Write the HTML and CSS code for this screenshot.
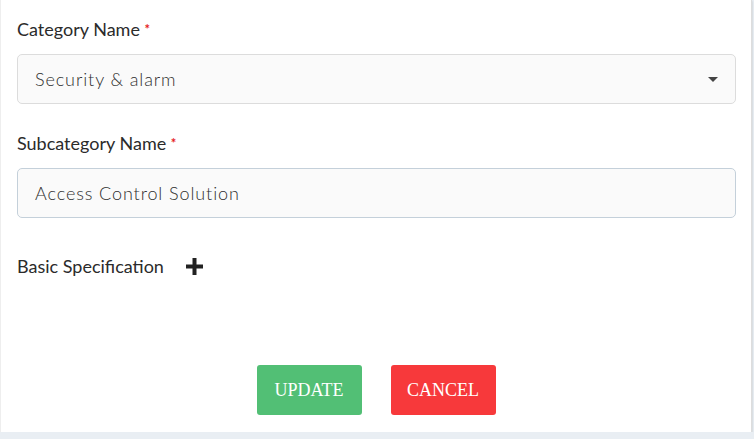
FILE: index.html
```html
<!DOCTYPE html>
<html lang="en">
  <head>
    <meta charset="UTF-8" />
    <title>Edit Subcategory</title>
    <link rel="stylesheet" href="styles.css">
  </head>
  <body>
    <div class="card">
      <form class="form">
        <div class="field">
          <label class="label">Category Name <span class="req">*</span></label>
          <div class="select">
            <span>Security &amp; alarm</span>
            <span class="caret"></span>
          </div>
        </div>

        <div class="field">
          <label class="label">Subcategory Name <span class="req">*</span></label>
          <div class="input">Access Control Solution</div>
        </div>

        <div class="spec">
          <span>Basic Specification</span>
          <svg class="plus" width="17" height="17" viewBox="0 0 17 17">
            <rect x="6.5" y="0" width="4" height="17" fill="#222" />
            <rect x="0" y="6.5" width="17" height="4" fill="#222" />
          </svg>
        </div>

        <div class="actions">
          <button type="button" class="button update">UPDATE</button>
          <button type="button" class="button cancel">CANCEL</button>
        </div>
      </form>
    </div>
  </body>
</html>
```

FILE: styles.css
```css
* {
  margin: 0;
  padding: 0;
  box-sizing: border-box;
}

body {
  background: #e9eef3;
  font-family: Lato, "Open Sans", sans-serif;
  color: #2b2b2b;
}

.card {
  width: 752px;
  height: 432px;
  background: #fff;
  border-left: 1px solid #eee;
  border-right: 1px solid #ddd;
  box-shadow: 0 1px 2px rgba(0, 0, 0, 0.2);
  padding: 17px 16px 18px 16px;
}

.field {
  margin-bottom: 27px;
}

.label {
  display: block;
  font-size: 18px;
  line-height: 24px;
  margin-bottom: 13px;
}

.req {
  color: #e51c23;
  font-size: 13px;
  font-weight: 700;
  vertical-align: top;
}

.select,
.input {
  height: 50px;
  width: 719px;
  display: flex;
  align-items: center;
  justify-content: space-between;
  padding: 0 17px;
  background: #fafafa;
  border: 1px solid #dcdcdc;
  border-radius: 5px;
  font-size: 18px;
  font-weight: 300;
  color: #2e2e2e;
  letter-spacing: 0.9px;
}

.input {
  border-color: #c4d0da;
}

.caret {
  width: 0;
  height: 0;
  border-left: 5px solid transparent;
  border-right: 5px solid transparent;
  border-top: 5px solid #444;
}

.spec {
  display: flex;
  align-items: center;
  gap: 22px;
  height: 24px;
  margin-top: 36px;
  font-size: 18px;
}

.actions {
  display: flex;
  justify-content: center;
  gap: 29px;
  margin-top: 87px;
}

.button {
  width: 105px;
  height: 50px;
  border: none;
  border-radius: 3px;
  color: #fff;
  font-family: "Liberation Serif", serif;
  font-size: 18px;
  cursor: pointer;
}

.update {
  background: #52bf75;
}

.cancel {
  background: #f7393b;
}
```
